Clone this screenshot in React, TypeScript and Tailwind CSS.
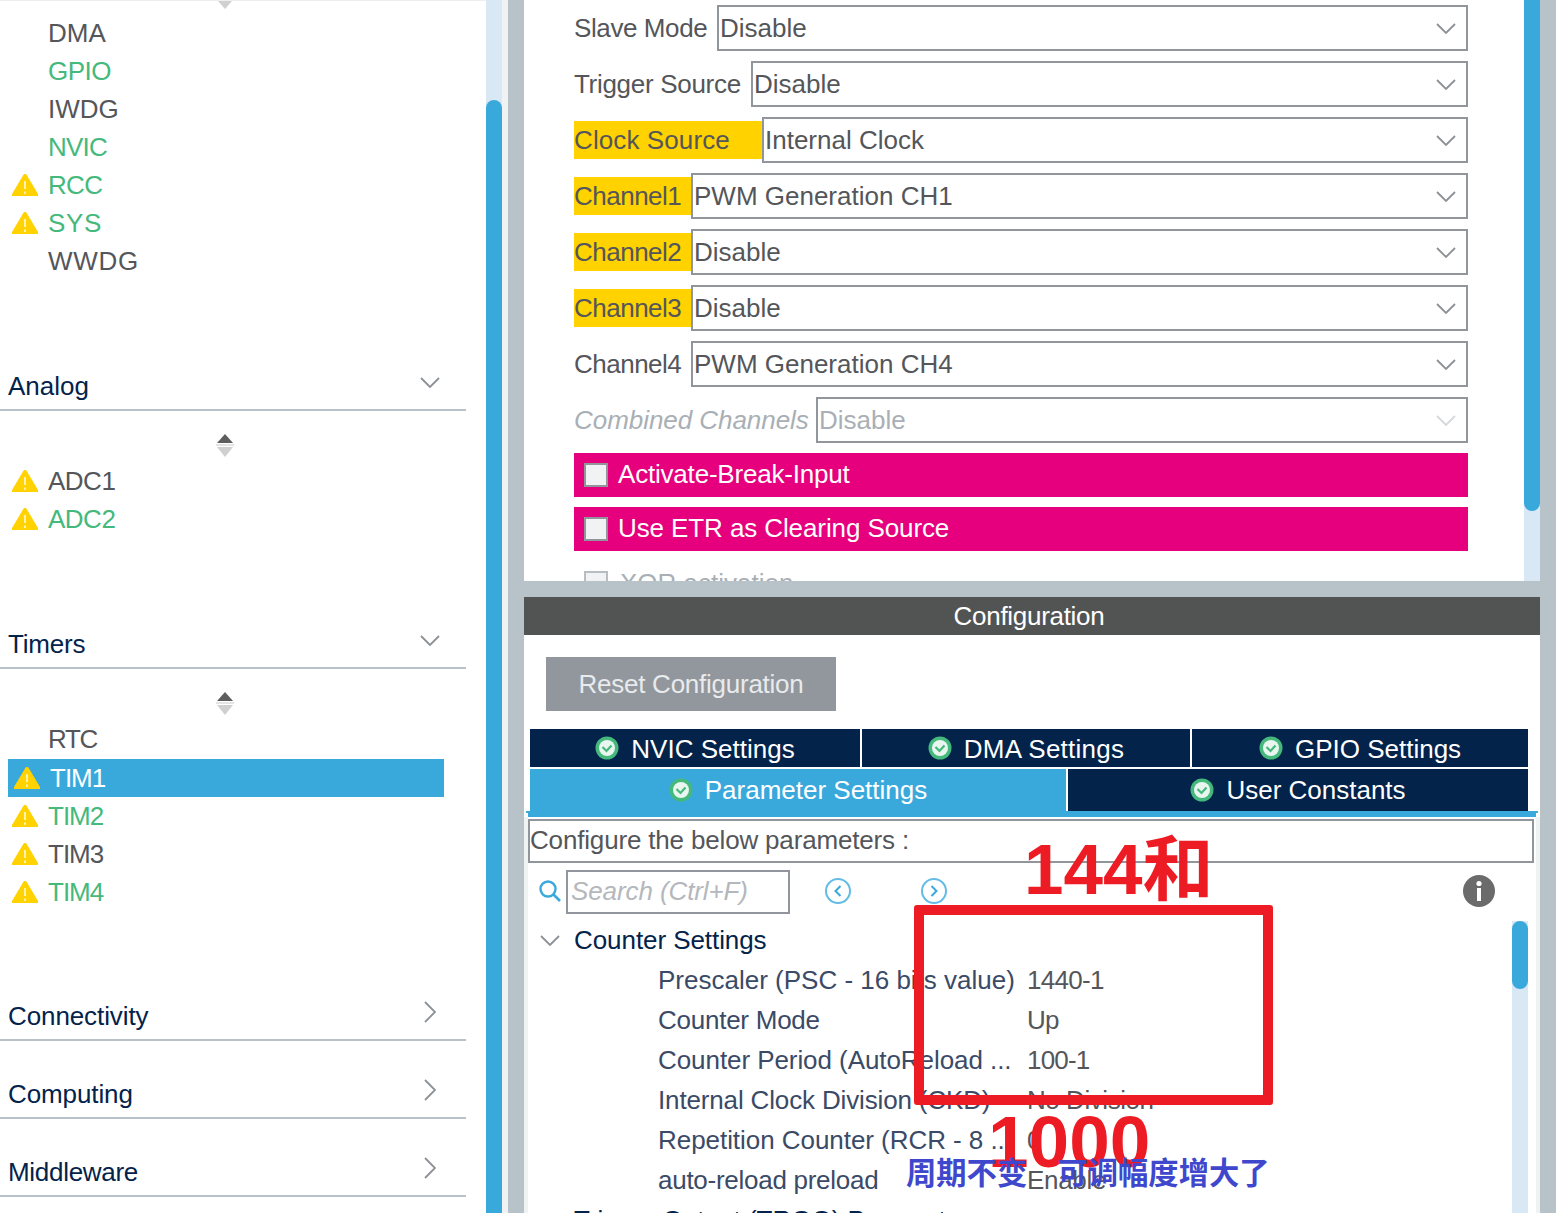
import React from "react";

const Chevron = ({ dir = "down", color = "#8c9196", className = "" }: { dir?: "down" | "right"; color?: string; className?: string }) =>
  dir === "down" ? (
    <svg width="20" height="11" viewBox="0 0 20 11" className={className}>
      <polyline points="1,1 10,10 19,1" fill="none" stroke={color} strokeWidth="1.8" />
    </svg>
  ) : (
    <svg width="12" height="22" viewBox="0 0 12 22" className={className}>
      <polyline points="1,1 11,11 1,21" fill="none" stroke={color} strokeWidth="1.8" />
    </svg>
  );

const Warn = () => (
  <svg width="26" height="22" viewBox="0 0 26 22">
    <path d="M13 0 C14 0 14.6 .6 15 1.4 L26 20 V22 H0 V20 L11 1.4 C11.4 .6 12 0 13 0Z" fill="#ffd200" />
    <path d="M13 7 V15 M13 17.5 V20" stroke="#fff6c4" strokeWidth="1.8" />
  </svg>
);

const Sort = () => (
  <svg width="18" height="24" viewBox="0 0 18 24">
    <path d="M9 0 L17 9 H1Z" fill="#5c5e60" />
    <rect x="0" y="10" width="18" height="2" fill="#e4e4e4" />
    <path d="M1 13 H17 L9 23Z" fill="#d0d0d0" />
  </svg>
);

const Item = ({ name, green, warn, track = "" }: { name: string; green?: boolean; warn?: boolean; track?: string }) => (
  <div className="flex h-[38px] items-center">
    <div className="flex w-[48px] shrink-0 pl-3">{warn && <Warn />}</div>
    <span className={`${green ? "text-[#45b97c]" : "text-[#54565a]"} ${track}`}>{name}</span>
  </div>
);

const SectionHead = ({ name, open, className, track = "" }: { name: string; open?: boolean; className: string; track?: string }) => (
  <div className={`flex h-[50px] w-[466px] items-center justify-between border-b-2 border-[#b8c2c9] pl-2 text-[#03234b] ${className}`}>
    <span className={`pt-[2px] ${track}`}>{name}</span>
    {open ? <Chevron dir="down" className="mr-[26px] mb-[6px]" /> : <Chevron dir="right" className="mr-[30px] mb-[6px]" />}
  </div>
);

const Field = ({ label, width, value, mark, off, track = "" }: { label: string; width: string; value: string; mark?: boolean; off?: boolean; track?: string }) => (
  <div className="flex h-[46px] items-center">
    <div className={`${width} h-[38px] shrink-0 leading-[38px] ${track} ${mark ? "bg-[#ffd200]" : ""} ${off ? "italic text-[#a9afb5]" : "text-[#54565a]"}`}>{label}</div>
    <div className={`flex h-[46px] flex-1 items-center justify-between border-2 border-[#90969b] pl-[1px] pr-[10px] ${off ? "text-[#a9afb5]" : "text-[#54565a]"}`}>
      <span>{value}</span>
      <Chevron color={off ? "#d5d8db" : "#8c9196"} />
    </div>
  </div>
);

const PinkRow = ({ label, track }: { label: string; track: string }) => (
  <div className="flex h-[44px] items-center bg-[#e6007e] pl-[10px] text-white">
    <div className="h-[24px] w-[24px] border-2 border-[#90969b] bg-[#f0f2f4]" />
    <span className={`ml-[10px] pb-[2px] ${track}`}>{label}</span>
  </div>
);

const Ok = () => (
  <svg width="24" height="24" viewBox="0 0 24 24" className="shrink-0">
    <circle cx="12" cy="12" r="11.5" fill="#45b97c" />
    <circle cx="12" cy="12" r="8" fill="#e9f5ef" />
    <polyline points="7.5,11 11.5,15 16.5,9.5" fill="none" stroke="#45b97c" strokeWidth="2.2" />
  </svg>
);

const Tab = ({ label, width, height, active, drop = "", track = "" }: { label: string; width: string; height: string; active?: boolean; drop?: string; track?: string }) => (
  <div className={`flex ${width} ${height} items-center justify-center gap-[12px] text-white ${active ? "bg-[#39a9dc]" : "bg-[#03234b]"}`}>
    <Ok />
    <span className={`${drop} ${track}`}>{label}</span>
  </div>
);

const Nav = ({ right, className }: { right?: boolean; className: string }) => (
  <svg width="26" height="26" viewBox="0 0 26 26" className={className}>
    <circle cx="13" cy="13" r="12" fill="none" stroke="#62bce6" strokeWidth="2" />
    <polyline points={right ? "10.5,8 15.5,13 10.5,18" : "15.5,8 10.5,13 15.5,18"} fill="none" stroke="#39a9dc" strokeWidth="2" />
  </svg>
);

const Param = ({ label, value, lt = "", vt = "" }: { label: string; value: string; lt?: string; vt?: string }) => (
  <div className="flex h-[40px] items-center pl-[130px]">
    <span className={`w-[369px] shrink-0 whitespace-nowrap text-[#3b4a66] ${lt}`}>{label}</span>
    <span className={`text-[#54565a] ${vt}`}>{value}</span>
  </div>
);

export default function App() {
  return (
    <div className="relative flex h-[1213px] w-[1564px] overflow-hidden bg-white font-['Liberation_Sans','Noto_Sans_CJK_SC',sans-serif] text-[26px]">
      {/* Left list */}
      <div className="w-[486px] shrink-0 border-t border-[#eeeeee]">
        <div className="flex h-[13px] w-[450px] justify-center">
          <svg width="14" height="8" viewBox="0 0 14 8"><path d="M0 0 H14 L7 8Z" fill="#d0d0d0" /></svg>
        </div>
        <Item name="DMA" />
        <Item name="GPIO" green track="tracking-[-0.5px]" />
        <Item name="IWDG" />
        <Item name="NVIC" green track="tracking-[-0.75px]" />
        <Item name="RCC" green warn track="tracking-[-0.67px]" />
        <Item name="SYS" green warn track="tracking-[0.67px]" />
        <Item name="WWDG" track="tracking-[0.75px]" />
        <SectionHead name="Analog" open className="mt-[81px]" />
        <div className="flex h-[51px] w-[450px] justify-center pt-[23px]"><Sort /></div>
        <Item name="ADC1" warn track="tracking-[-0.5px]" />
        <Item name="ADC2" green warn track="tracking-[-0.5px]" />
        <SectionHead name="Timers" open className="mt-[81px]" track="tracking-[-0.2px]" />
        <div className="flex h-[51px] w-[450px] justify-center pt-[23px]"><Sort /></div>
        <Item name="RTC" track="tracking-[-1.3px]" />
        <div className="mt-px ml-2 flex h-[38px] w-[436px] items-center bg-[#39a9dc] text-white">
          <div className="flex w-[42px] shrink-0 pl-[6px]"><Warn /></div>
          <span className="tracking-[-1px]">TIM1</span>
        </div>
        <Item name="TIM2" green warn track="tracking-[-1px]" />
        <Item name="TIM3" warn track="tracking-[-1px]" />
        <Item name="TIM4" green warn track="tracking-[-1px]" />
        <SectionHead name="Connectivity" className="mt-[80px]" track="tracking-[-0.1px]" />
        <SectionHead name="Computing" className="mt-[28px]" track="tracking-[-0.1px]" />
        <SectionHead name="Middleware" className="mt-[28px]" track="tracking-[-0.3px]" />
      </div>

      {/* Left scrollbar */}
      <div className="flex w-[16px] shrink-0 flex-col bg-[#d9e8f5] pt-[100px]">
        <div className="flex-1 rounded-t-full bg-[#39a9dc]" />
      </div>
      <div className="w-[6px] shrink-0 bg-[#f0f2f4]" />
      <div className="w-[16px] shrink-0 bg-[#b8c2c9]" />

      {/* Main */}
      <div className="flex w-[1016px] shrink-0 flex-col">
        <div className="flex h-[581px] shrink-0 overflow-hidden">
          <div className="flex-1 pt-[5px] pr-[56px] pl-[50px]">
            <div className="flex flex-col gap-[10px]">
              <Field label="Slave Mode" width="w-[143px]" value="Disable" track="tracking-[-0.4px]" />
              <Field label="Trigger Source" width="w-[177px]" value="Disable" track="tracking-[-0.3px]" />
              <Field label="Clock Source" width="w-[188px]" value="Internal Clock" mark track="tracking-[0.1px]" />
              <Field label="Channel1" width="w-[117px]" value="PWM Generation CH1" mark track="tracking-[-0.5px]" />
              <Field label="Channel2" width="w-[117px]" value="Disable" mark track="tracking-[-0.5px]" />
              <Field label="Channel3" width="w-[117px]" value="Disable" mark track="tracking-[-0.5px]" />
              <Field label="Channel4" width="w-[117px]" value="PWM Generation CH4" track="tracking-[-0.5px]" />
              <Field label="Combined Channels" width="w-[242px]" value="Disable" off track="tracking-[-0.05px]" />
              <PinkRow label="Activate-Break-Input" track="tracking-[-0.2px]" />
              <PinkRow label="Use ETR as Clearing Source" track="tracking-[-0.1px]" />
              <div className="mt-[10px] flex h-[24px] items-center pl-[10px] text-[#a9afb5]">
                <div className="h-[24px] w-[24px] border-2 border-[#b8bdc2] bg-[#f0f2f4]" />
                <span className="ml-[12px]">XOR activation</span>
              </div>
            </div>
          </div>
          <div className="flex w-[16px] shrink-0 flex-col bg-[#d9e8f5]">
            <div className="h-[511px] rounded-b-[8px] bg-[#39a9dc]" />
          </div>
        </div>
        <div className="h-[16px] shrink-0 bg-[#b8c2c9]" />
        <div className="flex h-[38px] shrink-0 items-center justify-center bg-[#525453] pr-[6px] tracking-[-0.3px] text-white">Configuration</div>

        <div className="ml-[22px] mt-[22px] flex h-[54px] w-[290px] shrink-0 items-center justify-center bg-[#91979c] tracking-[-0.25px] text-[#e8eaec]">Reset Configuration</div>

        <div className="mt-[18px] ml-[6px] flex w-[998px] shrink-0 gap-[2px]">
          <Tab label="NVIC Settings" width="w-[330px]" height="h-[38px]" drop="pt-[3px]" />
          <Tab label="DMA Settings" width="w-[328px]" height="h-[38px]" drop="pt-[3px]" track="tracking-[0.25px]" />
          <Tab label="GPIO Settings" width="w-[336px]" height="h-[38px]" drop="pt-[3px]" />
        </div>
        <div className="mt-[2px] ml-[6px] flex w-[998px] shrink-0 gap-[2px]">
          <Tab label="Parameter Settings" width="w-[536px]" height="h-[42px]" active />
          <Tab label="User Constants" width="w-[460px]" height="h-[42px]" />
        </div>
        <div className="ml-[2px] h-[2px] w-[1012px] shrink-0 bg-[#39a9dc]" />
        <div className="ml-[4px] h-[4px] w-[1008px] shrink-0 bg-[#39a9dc]" />

        <div className="flex min-h-0 flex-1">
          <div className="w-[4px] shrink-0 bg-[#f0f2f4]" />
          <div className="w-[1008px] shrink-0">
            <div className="mt-[2px] flex h-[44px] w-[1006px] items-center border-2 border-[#90969b] pb-[2px] text-[#54565a]">
              <span className="tracking-[-0.17px]">Configure the below parameters :</span>
            </div>
            <div className="mt-[6px] flex h-[46px] items-center">
              <svg width="24" height="24" viewBox="0 0 24 24" className="ml-[10px] mb-[2px]">
                <circle cx="10" cy="10" r="7.5" fill="none" stroke="#39a9dc" strokeWidth="2.4" />
                <line x1="15.5" y1="15.5" x2="22" y2="22" stroke="#39a9dc" strokeWidth="2.6" />
              </svg>
              <div className="ml-[4px] flex h-[44px] w-[224px] items-center border-2 border-[#90969b] pl-[3px] pb-[2px] italic tracking-[-0.1px] text-[#b4b8bc]">Search (Ctrl+F)</div>
              <Nav className="ml-[35px] mb-[2px]" />
              <Nav right className="ml-[70px] mb-[2px]" />
              <svg width="32" height="32" viewBox="0 0 32 32" className="ml-[516px] mb-[2px]">
                <circle cx="16" cy="16" r="16" fill="#6b6b6b" />
                <circle cx="16" cy="8.5" r="2.6" fill="#fff" />
                <rect x="14" y="13" width="4" height="13" fill="#fff" />
              </svg>
            </div>
            <div className="mt-[5px] flex">
              <div className="w-[984px] shrink-0">
                <div className="flex h-[40px] items-center pl-[12px] text-[#03234b]">
                  <Chevron className="mr-[14px]" />
                  <span className="tracking-[-0.07px]">Counter Settings</span>
                </div>
                <Param label="Prescaler (PSC - 16 bits value)" value="1440-1" vt="tracking-[-0.7px]" />
                <Param label="Counter Mode" value="Up" lt="tracking-[-0.25px]" vt="tracking-[-0.7px]" />
                <Param label="Counter Period (AutoReload ..." value="100-1" lt="tracking-[-0.07px]" vt="tracking-[-0.8px]" />
                <Param label="Internal Clock Division (CKD)" value="No Division" lt="tracking-[-0.15px]" vt="tracking-[-0.45px]" />
                <Param label="Repetition Counter (RCR - 8 ..." value="0" lt="tracking-[-0.05px]" />
                <Param label="auto-reload preload" value="Enable" lt="tracking-[-0.27px]" vt="tracking-[-0.3px]" />
                <div className="flex h-[40px] items-center pl-[46px] text-[#03234b]">Trigger Output (TRGO) Parameters</div>
              </div>
              <div className="mt-px h-[300px] w-[16px] shrink-0 bg-[#d9e8f5]">
                <div className="h-[68px] rounded-[8px] bg-[#39a9dc]" />
              </div>
            </div>
          </div>
          <div className="w-[4px] shrink-0 bg-[#f0f2f4]" />
        </div>
      </div>
      <div className="h-full w-[16px] shrink-0 bg-[#b8c2c9]" />

      {/* Annotations drawn over the screenshot */}
      <div className="absolute top-[905px] left-[914px] h-[200px] w-[359px] rounded-[3px] border-[10px] border-[#ed1c24]" />
      <div className="absolute top-[828px] left-[1024px] whitespace-nowrap text-[71px] leading-[84px] font-bold text-[#ed1c24]">144和</div>
      <div className="absolute top-[1100px] left-[988px] whitespace-nowrap text-[73px] leading-[84px] font-bold text-[#ed1c24]">1000</div>
      <div className="absolute top-[1154px] left-[906px] whitespace-nowrap text-[30.3px] leading-[40px] font-bold text-[#3f48cc]">周期不变　可调幅度增大了</div>
    </div>
  );
}
